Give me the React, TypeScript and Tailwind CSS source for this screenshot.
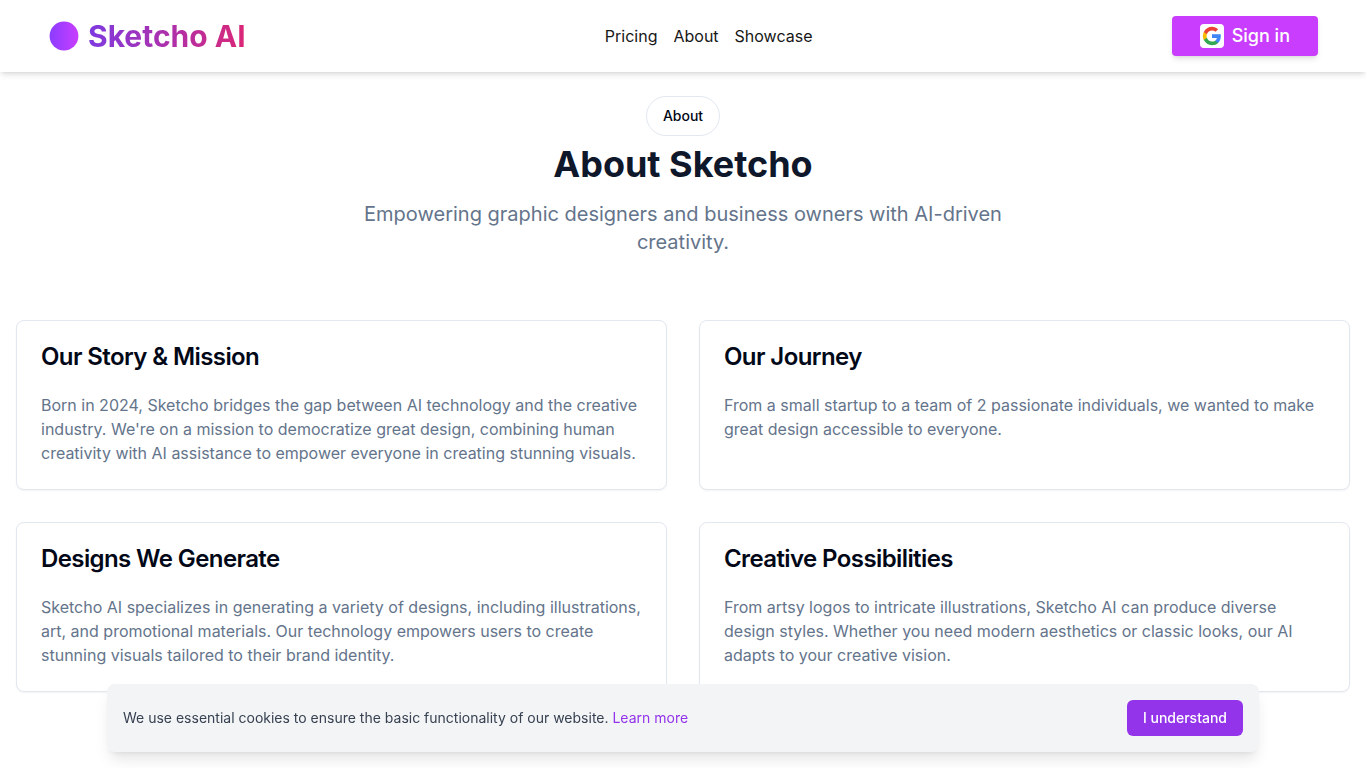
import { useState } from "react";

const links = ["Pricing", "About", "Showcase"];

const cards = [
  {
    title: "Our Story & Mission",
    body: "Born in 2024, Sketcho bridges the gap between AI technology and the creative industry. We're on a mission to democratize great design, combining human creativity with AI assistance to empower everyone in creating stunning visuals.",
  },
  {
    title: "Our Journey",
    body: "From a small startup to a team of 2 passionate individuals, we wanted to make great design accessible to everyone.",
  },
  {
    title: "Designs We Generate",
    body: "Sketcho AI specializes in generating a variety of designs, including illustrations, art, and promotional materials. Our technology empowers users to create stunning visuals tailored to their brand identity.",
  },
  {
    title: "Creative Possibilities",
    body: "From artsy logos to intricate illustrations, Sketcho AI can produce diverse design styles. Whether you need modern aesthetics or classic looks, our AI adapts to your creative vision.",
  },
];

function LogoMark() {
  return (
    <svg className="size-8" viewBox="0 0 32 32" aria-hidden="true">
      <defs>
        <linearGradient id="mark" x1="0" y1="0" x2="1" y2="0">
          <stop offset="0" stopColor="#8b3dff" />
          <stop offset="1" stopColor="#c93dff" />
        </linearGradient>
      </defs>
      <circle cx="16" cy="16" r="14.4" fill="url(#mark)" />
    </svg>
  );
}

function GoogleMark() {
  return (
    <span className="flex size-6 items-center justify-center rounded-sm bg-white">
      <svg className="size-5" viewBox="0 0 24 24" aria-hidden="true">
        <path fill="#4285F4" d="M22.56 12.25c0-.78-.07-1.53-.2-2.25H12v4.26h5.92c-.26 1.37-1.04 2.53-2.21 3.31v2.77h3.57c2.08-1.92 3.28-4.74 3.28-8.09z" />
        <path fill="#34A853" d="M12 23c2.97 0 5.46-.98 7.28-2.66l-3.57-2.77c-.98.66-2.23 1.06-3.71 1.06-2.86 0-5.29-1.93-6.16-4.53H2.18v2.84C3.99 20.53 7.7 23 12 23z" />
        <path fill="#FBBC05" d="M5.84 14.09c-.22-.66-.35-1.36-.35-2.09s.13-1.43.35-2.09V7.07H2.18C1.43 8.55 1 10.22 1 12s.43 3.45 1.18 4.93l2.85-2.22.81-.62z" />
        <path fill="#EA4335" d="M12 5.38c1.62 0 3.06.56 4.21 1.64l3.15-3.15C17.45 2.09 14.97 1 12 1 7.7 1 3.99 3.47 2.18 7.07l3.66 2.84c.87-2.6 3.3-4.53 6.16-4.53z" />
      </svg>
    </span>
  );
}

export default function App() {
  const [cookies, setCookies] = useState(true);

  return (
    <div className="min-h-screen bg-white font-['Inter',sans-serif] text-[#020817]">
      <header className="flex items-center justify-between bg-white px-12 py-4 shadow-md">
        <a href="#home" className="flex items-center gap-2">
          <LogoMark />
          <span className="bg-linear-to-r/srgb from-[#7e3ae0] to-[#db2777] bg-clip-text text-3xl font-bold text-transparent">
            Sketcho AI
          </span>
        </a>
        <nav className="flex gap-4 text-base text-[#171717]">
          {links.map((link) => (
            <a key={link} href={"#" + link.toLowerCase()}>
              {link}
            </a>
          ))}
        </nav>
        <button type="button" className="flex h-10 items-center gap-2 rounded-sm bg-[#c93dff] px-7 text-lg font-medium text-white shadow-md">
          <GoogleMark />
          Sign in
        </button>
      </header>

      <main className="px-4 py-6">
        <section className="flex flex-col items-center text-center">
          <div className="flex h-10 items-center rounded-full border border-[#e2e8f0] px-4 text-sm font-medium">About</div>
          <h1 className="mt-2 text-4xl font-bold text-[#0f172a]">About Sketcho</h1>
          <p className="mt-4 max-w-2xl text-xl text-[#64748b]">
            Empowering graphic designers and business owners with AI-driven creativity.
          </p>
        </section>

        <section className="mt-16 grid gap-8 md:grid-cols-2">
          {cards.map((card) => (
            <article key={card.title} className="rounded-lg border border-[#e2e8f0] bg-white p-6 shadow-xs">
              <h2 className="text-2xl leading-none font-semibold tracking-tight">{card.title}</h2>
              <p className="mt-6 text-base text-[#64748b]">{card.body}</p>
            </article>
          ))}
        </section>
      </main>

      {cookies && (
        <div className="fixed inset-x-4 bottom-4 mx-auto flex max-w-6xl items-center justify-between gap-4 rounded-lg bg-[#f3f4f6] p-4 shadow-lg">
          <p className="text-sm text-[#374151]">
            We use essential cookies to ensure the basic functionality of our website.{" "}
            <a href="#cookies" className="text-[#9333ea]">
              Learn more
            </a>
          </p>
          <button
            type="button"
            onClick={() => setCookies(false)}
            className="h-9 shrink-0 rounded-md bg-[#9333ea] px-4 text-sm font-medium text-white"
          >
            I understand
          </button>
        </div>
      )}
    </div>
  );
}
